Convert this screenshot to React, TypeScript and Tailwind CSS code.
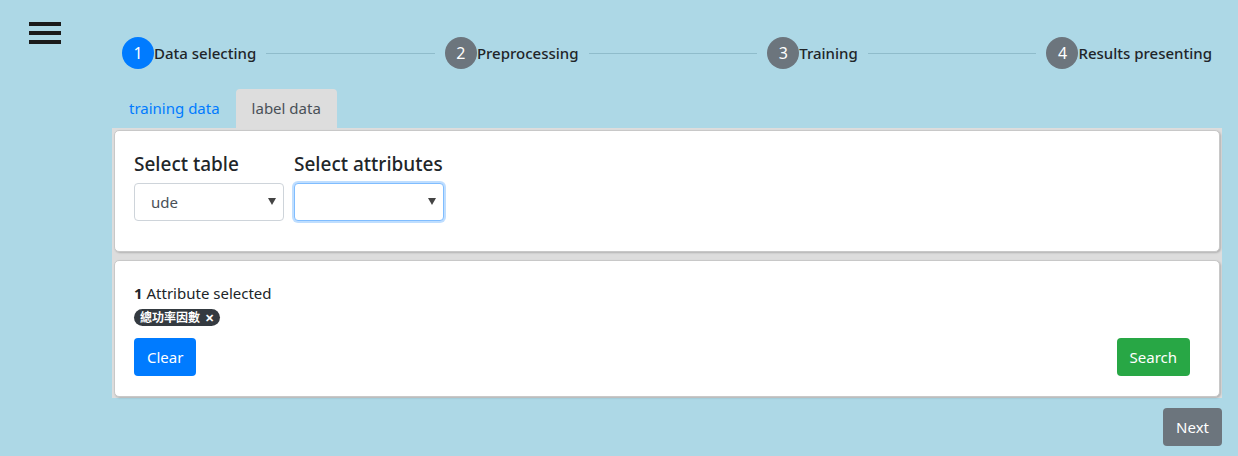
import React, { useState } from "react";

const steps = ["Data selecting", "Preprocessing", "Training", "Results presenting"];

function Arrow() {
  return (
    <svg className="pointer-events-none absolute right-[8px] top-[15px]" width="8" height="7" viewBox="0 0 8 7">
      <path d="M0 0 L8 0 L4 7 Z" fill="#444" />
    </svg>
  );
}

export default function App() {
  const [tab, setTab] = useState("label");
  const [table, setTable] = useState("ude");

  return (
    <div
      className="w-[1238px] h-[456px] bg-[#add8e6] text-[#212529] relative overflow-hidden"
      style={{ fontFamily: '"Noto Sans", "Noto Sans CJK TC", sans-serif' }}
    >
      {/* hamburger */}
      <button className="absolute left-[29px] top-[22px] flex flex-col gap-[5px]">
        <span className="block w-[32px] h-[4px] bg-[#1b1b1b]" />
        <span className="block w-[32px] h-[4px] bg-[#1b1b1b]" />
        <span className="block w-[32px] h-[4px] bg-[#1b1b1b]" />
      </button>

      <div className="pl-[112px] pr-[16px]">
        {/* stepper */}
        <div className="flex items-center pt-[37px] pl-[10px] pr-[10px]">
          {steps.map((s, i) => (
            <React.Fragment key={s}>
              {i > 0 && <div className="flex-1 h-px bg-[#8fbccb] mx-[10px]" />}
              <div className="flex items-center">
                <span
                  className={`w-[32px] h-[32px] rounded-full flex items-center justify-center text-white text-[16px] ${
                    i === 0 ? "bg-[#007bff]" : "bg-[#6c757d]"
                  }`}
                >
                  {i + 1}
                </span>
                <span className="text-[15px] font-medium text-[#212529]">{s}</span>
              </div>
            </React.Fragment>
          ))}
        </div>

        {/* tabs */}
        <div className="flex mt-[20px] h-[39px] pl-px">
          <button
            onClick={() => setTab("training")}
            className={`px-[16px] rounded-t-[4px] text-[15px] ${tab === "training" ? "bg-[#dddddd] text-[#495057]" : "text-[#007bff]"}`}
          >
            training data
          </button>
          <button
            onClick={() => setTab("label")}
            className={`px-[16px] rounded-t-[4px] text-[15px] ${tab === "label" ? "bg-[#dddddd] text-[#495057]" : "text-[#007bff]"}`}
          >
            label data
          </button>
        </div>

        {/* content */}
        <div className="bg-[#dddddd] p-[2px] pb-px w-[1110px]">
          <div className="bg-white rounded-[5px] border border-[#c8c8c8] shadow-[1px_1px_2px_rgba(0,0,0,0.2)] h-[122px] px-[19px] pt-[20px]">
            <div className="flex gap-[10px]">
              <div className="flex flex-col">
                <label className="text-[19px] font-medium leading-[26px] mb-[6px]">Select table</label>
                <div className="relative">
                  <select
                    value={table}
                    onChange={(e) => setTable(e.target.value)}
                    className="appearance-none w-[150px] h-[38px] border border-[#ced4da] rounded-[4px] pl-[16px] text-[15px] text-[#495057] bg-white outline-none"
                  >
                    <option value="ude">ude</option>
                  </select>
                  <Arrow />
                </div>
              </div>
              <div className="flex flex-col">
                <label className="text-[19px] font-medium leading-[26px] mb-[6px]">Select attributes</label>
                <div className="relative">
                  <select className="appearance-none w-[150px] h-[38px] border border-[#80bdff] rounded-[4px] pl-[16px] text-[15px] bg-white outline-none shadow-[0_0_0_2px_rgba(0,123,255,0.25)]">
                    <option value=""></option>
                  </select>
                  <Arrow />
                </div>
              </div>
            </div>
          </div>

          <div className="mt-[8px] bg-white rounded-[5px] border border-[#c8c8c8] shadow-[1px_1px_2px_rgba(0,0,0,0.2)] h-[137px] pl-[19px] pr-[29px] pt-[21px]">
            <div className="text-[15px] leading-[22px]">
              <span className="font-bold">1</span> Attribute selected
            </div>
            <div className="mt-[5px] flex">
              <span className="inline-flex items-center h-[17px] px-[6px] rounded-full bg-[#343a40] text-white text-[12px] font-bold leading-none">
                總功率因數
                <span className="ml-[5px] text-[11px]">✕</span>
              </span>
            </div>
            <div className="mt-[12px] flex justify-between">
              <button className="h-[38px] px-[13px] rounded-[4px] bg-[#007bff] text-white text-[15px]">Clear</button>
              <button className="h-[38px] px-[13px] rounded-[4px] bg-[#28a745] text-white text-[15px]">Search</button>
            </div>
          </div>
        </div>

        <div className="flex justify-end w-[1110px] mt-[10px]">
          <button className="h-[38px] px-[13px] rounded-[4px] bg-[#6c757d] text-white text-[15px]">Next</button>
        </div>
      </div>
    </div>
  );
}
